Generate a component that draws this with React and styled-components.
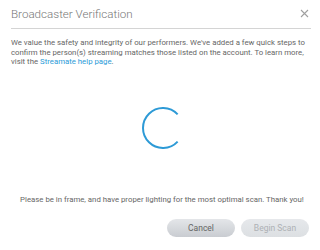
import React from "react";
import styled, { createGlobalStyle } from "styled-components";

const GlobalStyle = createGlobalStyle`
  html, body {
    margin: 0;
    padding: 0;
    background: #fff;
  }
  body {
    font-family: Roboto, "Liberation Sans", sans-serif;
  }
`;

const Dialog = styled.div`
  width: 320px;
  height: 250px;
  box-sizing: border-box;
  padding: 0 9px 0 11px;
  display: flex;
  flex-direction: column;
  background: #fff;
`;

const Header = styled.div`
  height: 28px;
  border-bottom: 1px solid #d4d4d4;
  display: flex;
  align-items: center;
  justify-content: space-between;
`;

const Title = styled.h1`
  margin: 0;
  font-size: 11.6px;
  font-weight: 300;
  color: #777;
  padding-bottom: 1px;
`;

const CloseButton = styled.button`
  border: none;
  background: none;
  padding: 0;
  margin: 0 2px 2px 0;
  width: 9px;
  height: 9px;
  display: flex;
  cursor: pointer;
`;

const Intro = styled.p`
  margin: 9px 0 0;
  font-size: 7.8px;
  line-height: 9.7px;
  color: #666;
`;

const Link = styled.a`
  color: #2b9bd8;
  text-decoration: none;
`;

const SpinnerWrap = styled.div`
  margin-top: 40px;
  display: flex;
  justify-content: center;
  padding-left: 3px;
`;

const Note = styled.p`
  margin: 46px 0 0;
  font-size: 7.8px;
  line-height: 10px;
  color: #666;
  text-align: center;
  padding-left: 2px;
`;

const Actions = styled.div`
  margin-top: 14px;
  display: flex;
  justify-content: flex-end;
  gap: 6px;
  padding-right: 2px;
`;

const Button = styled.button`
  width: 68px;
  height: 18px;
  border: none;
  border-radius: 9px;
  font-family: Roboto, "Liberation Sans", sans-serif;
  font-size: 8.5px;
  padding: 0;
  color: ${(p) => (p.$disabled ? "#aeb1b5" : "#666")};
  background: ${(p) =>
    p.$disabled
      ? "linear-gradient(#e6e8eb, #dcdfe2)"
      : "linear-gradient(#e4e6e9, #c9ccd1)"};
  cursor: ${(p) => (p.$disabled ? "default" : "pointer")};
`;

function Spinner() {
  const r = 20;
  const cx = 21;
  const cy = 21;
  const a1 = (-43 * Math.PI) / 180;
  const a2 = (43 * Math.PI) / 180;
  const x1 = cx + r * Math.cos(a1);
  const y1 = cy + r * Math.sin(a1);
  const x2 = cx + r * Math.cos(a2);
  const y2 = cy + r * Math.sin(a2);
  return (
    <svg width="42" height="42" viewBox="0 0 42 42">
      <path
        d={`M ${x1} ${y1} A ${r} ${r} 0 1 0 ${x2} ${y2}`}
        fill="none"
        stroke="#2d9ad6"
        strokeWidth="2"
      />
    </svg>
  );
}

export default function App() {
  return (
    <>
      <GlobalStyle />
      <Dialog>
        <Header>
          <Title>Broadcaster Verification</Title>
          <CloseButton aria-label="Close">
            <svg width="9" height="9" viewBox="0 0 9 9">
              <path d="M1 1 L8 8 M8 1 L1 8" stroke="#a0a0a0" strokeWidth="1.1" />
            </svg>
          </CloseButton>
        </Header>
        <Intro>
          We value the safety and integrity of our performers. We've added a few
          quick steps to confirm the person(s) streaming matches those listed on
          the account. To learn more, visit the{" "}
          <Link href="#">Streamate help page</Link>.
        </Intro>
        <SpinnerWrap>
          <Spinner />
        </SpinnerWrap>
        <Note>
          Please be in frame, and have proper lighting for the most optimal
          scan. Thank you!
        </Note>
        <Actions>
          <Button>Cancel</Button>
          <Button $disabled>Begin Scan</Button>
        </Actions>
      </Dialog>
    </>
  );
}
